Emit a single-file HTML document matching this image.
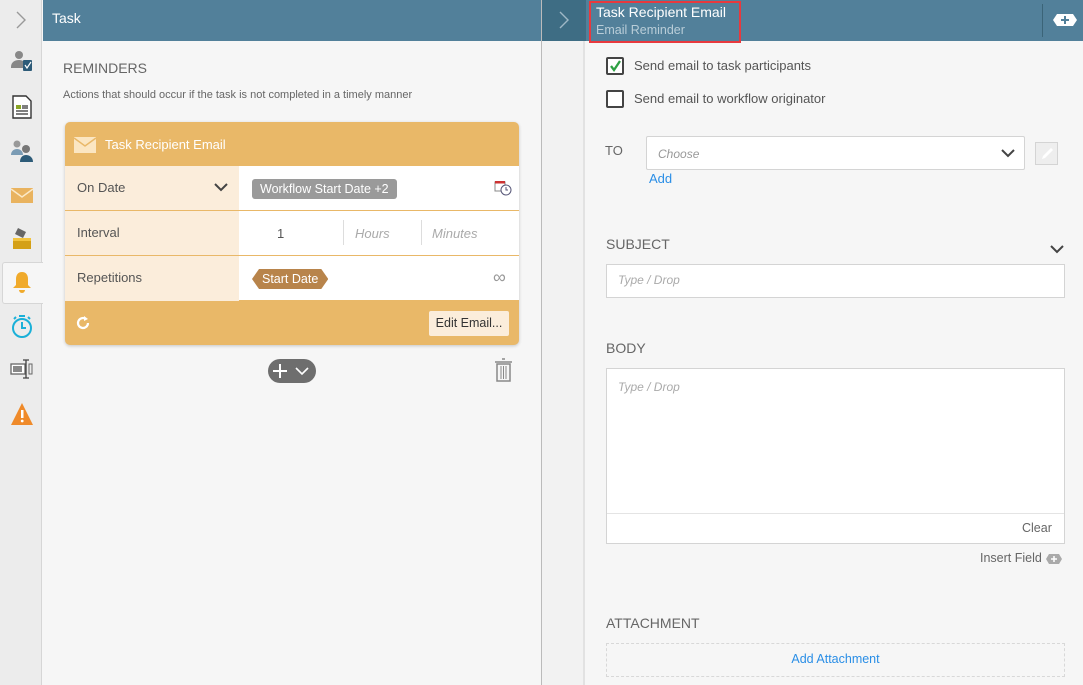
<!DOCTYPE html>
<html><head><meta charset="utf-8"><style>
*{box-sizing:border-box;margin:0;padding:0}
body{width:1083px;height:685px;overflow:hidden;font-family:"Liberation Sans",sans-serif;background:#f6f6f6;position:relative;font-size:13px;color:#555}
.abs{position:absolute}
.side{left:0;top:0;width:42px;height:685px;background:#ececec;border-right:1px solid #d6d6d6}
.hdr{top:0;height:41px;background:#52809a}
.ic{position:absolute;left:10px;width:24px;height:24px}
.row{position:absolute;left:65px;width:454px;height:45px;border-bottom:1px solid #e9b868}
.lab{position:absolute;left:0;top:0;width:174px;height:100%;background:#fbeddb;padding-left:12px;line-height:44px;color:#555}
.chk{position:absolute;width:18px;height:18px;border:2px solid #444;border-radius:2px;background:#fff}
.sec{position:absolute;left:606px;font-size:14px;color:#666}
</style></head><body>
<div class="abs side"></div>
<div class="abs" style="left:2px;top:262px;width:41px;height:42px;background:#f6f6f6;border:1px solid #d6d6d6;border-right:none;border-radius:3px 0 0 3px"></div>
<svg class="abs" style="left:15px;top:11px" width="12" height="18"><path d="M2 1 L10 9 L2 17" stroke="#999" stroke-width="1.4" fill="none"/></svg>
<!-- sidebar icons -->
<svg class="ic" style="top:50px" viewBox="0 0 24 24"><circle cx="9" cy="5" r="4" fill="#888"/><path d="M1 17c0-5 4-7 8-7s5 2 6 3v5H1z" fill="#888"/><rect x="13" y="10" width="9" height="11" rx="1" fill="#2d5b78"/><path d="M15 15l2 3 4-6" stroke="#fff" stroke-width="1.2" fill="none"/></svg>
<svg class="ic" style="top:95px" viewBox="0 0 24 24"><path d="M3 1h13l5 5v17H3z" fill="#fff" stroke="#333" stroke-width="1.4"/><rect x="6" y="10" width="5" height="4" fill="#8aa526"/><path d="M12 11h6M12 13h6M6 16h12M6 19h12" stroke="#333" stroke-width="1.3"/></svg>
<svg class="ic" style="top:139px" viewBox="0 0 24 24"><circle cx="7" cy="5" r="3.5" fill="#999"/><path d="M1 16c0-4 3-6 6-6s6 2 6 6z" fill="#7a9bb4"/><circle cx="16" cy="10" r="4" fill="#777"/><path d="M10 23c0-5 3-7 6-7s7 2 7 7z" fill="#2d5b78"/></svg>
<svg class="ic" style="top:183px" viewBox="0 0 24 24"><rect x="1" y="5" width="22" height="15" fill="#e9b35f"/><path d="M1 6l11 8 11-8" stroke="#fbe9c8" stroke-width="1.5" fill="none"/></svg>
<svg class="ic" style="top:226px" viewBox="0 0 24 24"><path d="M8 2l8 4-3 6-8-4z" fill="#666"/><rect x="3" y="12" width="18" height="11" fill="#d4a017"/><rect x="3" y="12" width="18" height="3" fill="#f2c33e"/></svg>
<svg class="ic" style="top:270px" viewBox="0 0 24 24"><path d="M12 2c-4 0-6 3-6 7v6l-3 3h18l-3-3V9c0-4-2-7-6-7z" fill="#f0aa2b"/><path d="M9 20a3 3 0 006 0z" fill="#f0aa2b"/></svg>
<svg class="ic" style="top:314px" viewBox="0 0 24 24"><circle cx="12" cy="14" r="9" fill="none" stroke="#1ab0d8" stroke-width="2"/><path d="M12 8v6h4M9 2h6M4 5l2-2M20 5l-2-2" stroke="#1ab0d8" stroke-width="2" fill="none"/></svg>
<svg class="ic" style="top:357px" viewBox="0 0 24 24"><rect x="1" y="7" width="14" height="10" fill="#fff" stroke="#666" stroke-width="1.3"/><rect x="3" y="9" width="9" height="6" fill="#888"/><path d="M16 3v18M13 3h6M13 21h6" stroke="#444" stroke-width="1.3"/><rect x="19" y="7" width="3" height="10" fill="none" stroke="#666"/></svg>
<svg class="ic" style="top:402px" viewBox="0 0 24 24"><path d="M12 1L23 23H1z" fill="#ef8a2a"/><rect x="11" y="8" width="2.5" height="8" fill="#fff"/><circle cx="12.2" cy="19" r="1.4" fill="#fff"/></svg>

<!-- left header -->
<div class="abs hdr" style="left:43px;width:498px"></div>
<div class="abs" style="left:52px;top:10px;color:#fff;font-size:14px">Task</div>
<div class="abs" style="left:63px;top:60px;font-size:14px;color:#666">REMINDERS</div>
<div class="abs" style="left:63px;top:89px;font-size:11px;color:#666">Actions that should occur if the task is not completed in a timely manner</div>

<!-- card -->
<div class="abs" style="left:65px;top:122px;width:454px;height:223px;border-radius:5px;background:#e9b868;box-shadow:0 1px 3px rgba(0,0,0,.2);overflow:hidden">
 <div class="abs" style="left:0;top:44px;width:454px;height:134px;background:#fff"></div>
</div>
<svg class="abs" style="left:74px;top:136px" width="24" height="18"><rect x="0" y="1" width="22" height="16" fill="#fbe6c2"/><path d="M0 2l11 8 11-8" stroke="#e9b868" stroke-width="1.5" fill="none"/></svg>
<div class="abs" style="left:105px;top:137px;color:#fff;font-size:13px">Task Recipient Email</div>
<div class="row" style="top:166px"><div class="lab">On Date</div>
 <svg class="abs" style="left:149px;top:16px" width="14" height="10"><path d="M1 2l6 6 6-6" stroke="#444" stroke-width="2" fill="none"/></svg>
 <div class="abs" style="left:187px;top:13px;background:#9a9a9a;color:#fff;border-radius:3px;padding:0 8px;height:20px;line-height:20px;font-size:12.5px">Workflow Start Date +2</div>
 <svg class="abs" style="left:429px;top:14px" width="18" height="16"><rect x="1" y="2" width="10" height="9" fill="none" stroke="#888"/><rect x="1" y="1" width="10" height="2.5" fill="#c33"/><circle cx="12" cy="10" r="5" fill="#fff" stroke="#557"/><path d="M12 7v3h2" stroke="#557" fill="none"/></svg>
</div>
<div class="row" style="top:211px"><div class="lab">Interval</div>
 <div class="abs" style="left:212px;top:15px">1</div>
 <div class="abs" style="left:278px;top:9px;height:25px;border-left:1px solid #ddd"></div>
 <div class="abs" style="left:290px;top:15px;font-style:italic;color:#aaa">Hours</div>
 <div class="abs" style="left:356px;top:9px;height:25px;border-left:1px solid #ddd"></div>
 <div class="abs" style="left:367px;top:15px;font-style:italic;color:#aaa">Minutes</div>
</div>
<div class="row" style="top:256px;border-bottom:none"><div class="lab">Repetitions</div>
 <div class="abs" style="left:187px;top:13px;background:#b8844b;color:#fff;height:20px;line-height:20px;padding:0 10px;font-size:12.5px;clip-path:polygon(7px 0,calc(100% - 7px) 0,100% 50%,calc(100% - 7px) 100%,7px 100%,0 50%)">Start Date</div>
 <div class="abs" style="left:428px;top:11px;color:#999;font-size:18px">∞</div>
</div>
<svg class="abs" style="left:75px;top:315px" width="16" height="16"><path d="M13 8a5 5 0 11-2-4" stroke="#fff" stroke-width="2.2" fill="none"/><path d="M9 1l4 3-4 2z" fill="#fff"/></svg>
<div class="abs" style="left:429px;top:311px;width:80px;height:25px;background:#fbeddb;border-radius:2px;line-height:25px;text-align:center;color:#333;font-size:12.5px">Edit Email...</div>
<div class="abs" style="left:268px;top:359px;width:48px;height:24px;border-radius:12px;background:#6e6e6e"></div>
<svg class="abs" style="left:268px;top:359px" width="48" height="24"><path d="M12 5v14M5 12h14" stroke="#fff" stroke-width="2"/><path d="M28 9l6 6 6-6" stroke="#fff" stroke-width="1.6" fill="none"/></svg>
<svg class="abs" style="left:494px;top:358px" width="20" height="25"><path d="M1 4h17M8 1h3" stroke="#888" stroke-width="1.5"/><path d="M3 6h13v17H3z" fill="none" stroke="#888" stroke-width="1.5"/><path d="M7 8v13M9.5 8v13M12 8v13" stroke="#888"/></svg>

<!-- divider strip -->
<div class="abs" style="left:541px;top:0;width:1px;height:685px;background:#bbb"></div>
<div class="abs" style="left:542px;top:0;width:43px;height:685px;background:#f2f2f2;border-right:2px solid #e2e2e2"></div>
<div class="abs" style="left:542px;top:0;width:44px;height:41px;background:#3e6d84"></div>
<svg class="abs" style="left:558px;top:11px" width="12" height="18"><path d="M2 1l8 8-8 8" stroke="#9fb8c6" stroke-width="1.4" fill="none"/></svg>

<!-- right panel -->
<div class="abs hdr" style="left:586px;width:497px"></div>
<div class="abs" style="left:589px;top:1px;width:152px;height:42px;border:2px solid #e8393e"></div>
<div class="abs" style="left:596px;top:4px;color:#fff;font-size:14px">Task Recipient Email</div>
<div class="abs" style="left:596px;top:23px;color:#b9cdd8;font-size:12.5px">Email Reminder</div>
<div class="abs" style="left:1042px;top:4px;width:1px;height:33px;background:#3b6478"></div>
<svg class="abs" style="left:1052px;top:13px" width="26" height="14"><path d="M5 1h16l4 6-4 6H5L1 7z" fill="#fff"/><path d="M13 3v8M9 7h8" stroke="#52809a" stroke-width="2"/></svg>

<div class="chk" style="left:606px;top:57px"></div>
<svg class="abs" style="left:608px;top:58px" width="16" height="16"><path d="M3 8l3 4 6-9" stroke="#2ea043" stroke-width="2.3" fill="none"/></svg>
<div class="abs" style="left:634px;top:58px">Send email to task participants</div>
<div class="chk" style="left:606px;top:90px"></div>
<div class="abs" style="left:634px;top:91px">Send email to workflow originator</div>

<div class="abs" style="left:605px;top:143px;color:#666">TO</div>
<div class="abs" style="left:646px;top:136px;width:379px;height:34px;background:#fff;border:1px solid #d4d4d4;border-radius:2px"></div>
<div class="abs" style="left:658px;top:147px;font-style:italic;color:#999;font-size:12px">Choose</div>
<svg class="abs" style="left:1001px;top:148px" width="14" height="10"><path d="M1 2l6 6 6-6" stroke="#444" stroke-width="2" fill="none"/></svg>
<div class="abs" style="left:1035px;top:142px;width:23px;height:23px;background:#eee;border:1px solid #d4d4d4"></div>
<svg class="abs" style="left:1039px;top:146px" width="16" height="16"><path d="M3 13l1-3 8-8 2 2-8 8z" fill="#fff"/></svg>
<div class="abs" style="left:649px;top:171px;color:#2a8ee6">Add</div>

<div class="sec" style="top:236px">SUBJECT</div>
<svg class="abs" style="left:1050px;top:244px" width="14" height="10"><path d="M1 2l6 6 6-6" stroke="#444" stroke-width="2" fill="none"/></svg>
<div class="abs" style="left:606px;top:264px;width:459px;height:34px;background:#fff;border:1px solid #d4d4d4"></div>
<div class="abs" style="left:618px;top:273px;font-style:italic;color:#aaa;font-size:12px">Type / Drop</div>

<div class="sec" style="top:340px">BODY</div>
<div class="abs" style="left:606px;top:368px;width:459px;height:176px;background:#fff;border:1px solid #d4d4d4"></div>
<div class="abs" style="left:607px;top:513px;width:457px;height:1px;background:#e4e4e4"></div>
<div class="abs" style="left:618px;top:380px;font-style:italic;color:#aaa;font-size:12px">Type / Drop</div>
<div class="abs" style="left:1022px;top:521px;color:#666;font-size:12.5px">Clear</div>
<div class="abs" style="left:980px;top:551px;color:#666;font-size:12.5px">Insert Field</div>
<svg class="abs" style="left:1046px;top:554px" width="16" height="10"><path d="M3 0h10l3 5-3 5H3L0 5z" fill="#aaa"/><path d="M8 2v6M5 5h6" stroke="#fff" stroke-width="1.5"/></svg>

<div class="sec" style="top:615px">ATTACHMENT</div>
<div class="abs" style="left:606px;top:643px;width:459px;height:34px;border:1px dashed #d8d8d8"></div>
<div class="abs" style="left:606px;top:652px;width:459px;text-align:center;color:#2a8ee6;font-size:12.5px">Add Attachment</div>
</body></html>
